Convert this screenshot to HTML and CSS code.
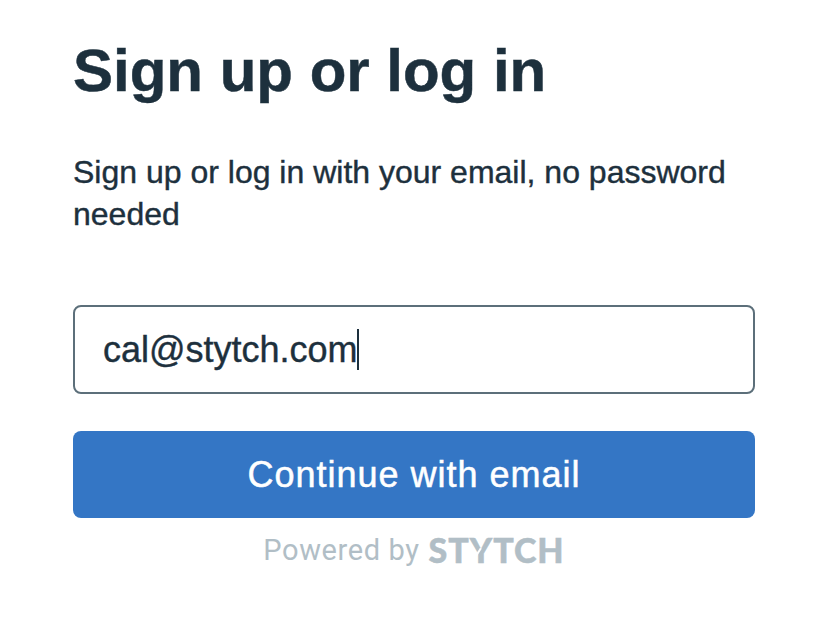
FILE: index.html
```html
<!DOCTYPE html>
<html lang="en">
<head>
<meta charset="utf-8">
<title>Sign up or log in</title>
<link rel="stylesheet" href="styles.css">
</head>
<body>
<main class="login">
  <h1 class="title">Sign up or log in</h1>
  <p class="intro">Sign up or log in with your email, no password needed</p>
  <div class="field"><span class="value">cal@stytch.com</span><span class="caret"></span></div>
  <button class="submit"><span class="label">Continue with email</span></button>
  <footer class="powered"><span class="by">Powered by</span><span class="brand">ST<span class="notch">Y</span>TCH</span></footer>
</main>
</body>
</html>
```
FILE: styles.css
```css
* { box-sizing: border-box; }
body {
  margin: 0;
  background: #fff;
  color: #1d303d;
  font-family: "Liberation Sans", Arial, sans-serif;
}
.login {
  display: flex;
  flex-direction: column;
  width: 682px;
  margin-left: 73px;
  padding-top: 33px;
}
.title {
  margin: 0;
  font-size: 60px;
  line-height: 76px;
  font-weight: 700;
  white-space: nowrap;
  -webkit-text-stroke: 0.5px currentColor;
}
.intro {
  margin: 42px 0 0;
  font-size: 32px;
  line-height: 42px;
  -webkit-text-stroke: 0.4px currentColor;
}
.field {
  display: flex;
  align-items: center;
  height: 89px;
  margin-top: 70px;
  padding-left: 28px;
  border: 2px solid #5c6f7a;
  border-radius: 8px;
  font-size: 36px;
}
.value { -webkit-text-stroke: 0.4px currentColor; }
.caret {
  width: 2px;
  height: 41px;
  margin-left: -1px;
  background: #1d303d;
}
.submit {
  height: 87px;
  margin-top: 37px;
  padding: 0;
  border: 0;
  border-radius: 8px;
  background: #3476c5;
  color: #fff;
  font: 36px "Liberation Sans", Arial, sans-serif;
  letter-spacing: 1px;
  -webkit-text-stroke: 0.5px currentColor;
}
.powered {
  display: flex;
  justify-content: center;
  align-items: center;
  gap: 9px;
  height: 36px;
  margin-top: 14px;
  color: #b1bec6;
}
.by {
  font-family: Roboto, sans-serif;
  font-size: 29px;
  line-height: 36px;
  letter-spacing: 0.6px;
}
.brand {
  font-family: Lato, sans-serif;
  font-size: 34px;
  line-height: 36px;
  font-weight: 900;
  letter-spacing: 1px;
  -webkit-text-stroke: 0.5px currentColor;
}
.notch {
  position: relative;
  display: inline-block;
}
.notch::after {
  content: "";
  position: absolute;
  left: 4px;
  top: 19px;
  width: 9px;
  height: 2px;
  background: #fff;
  transform: rotate(-58deg);
}
```
